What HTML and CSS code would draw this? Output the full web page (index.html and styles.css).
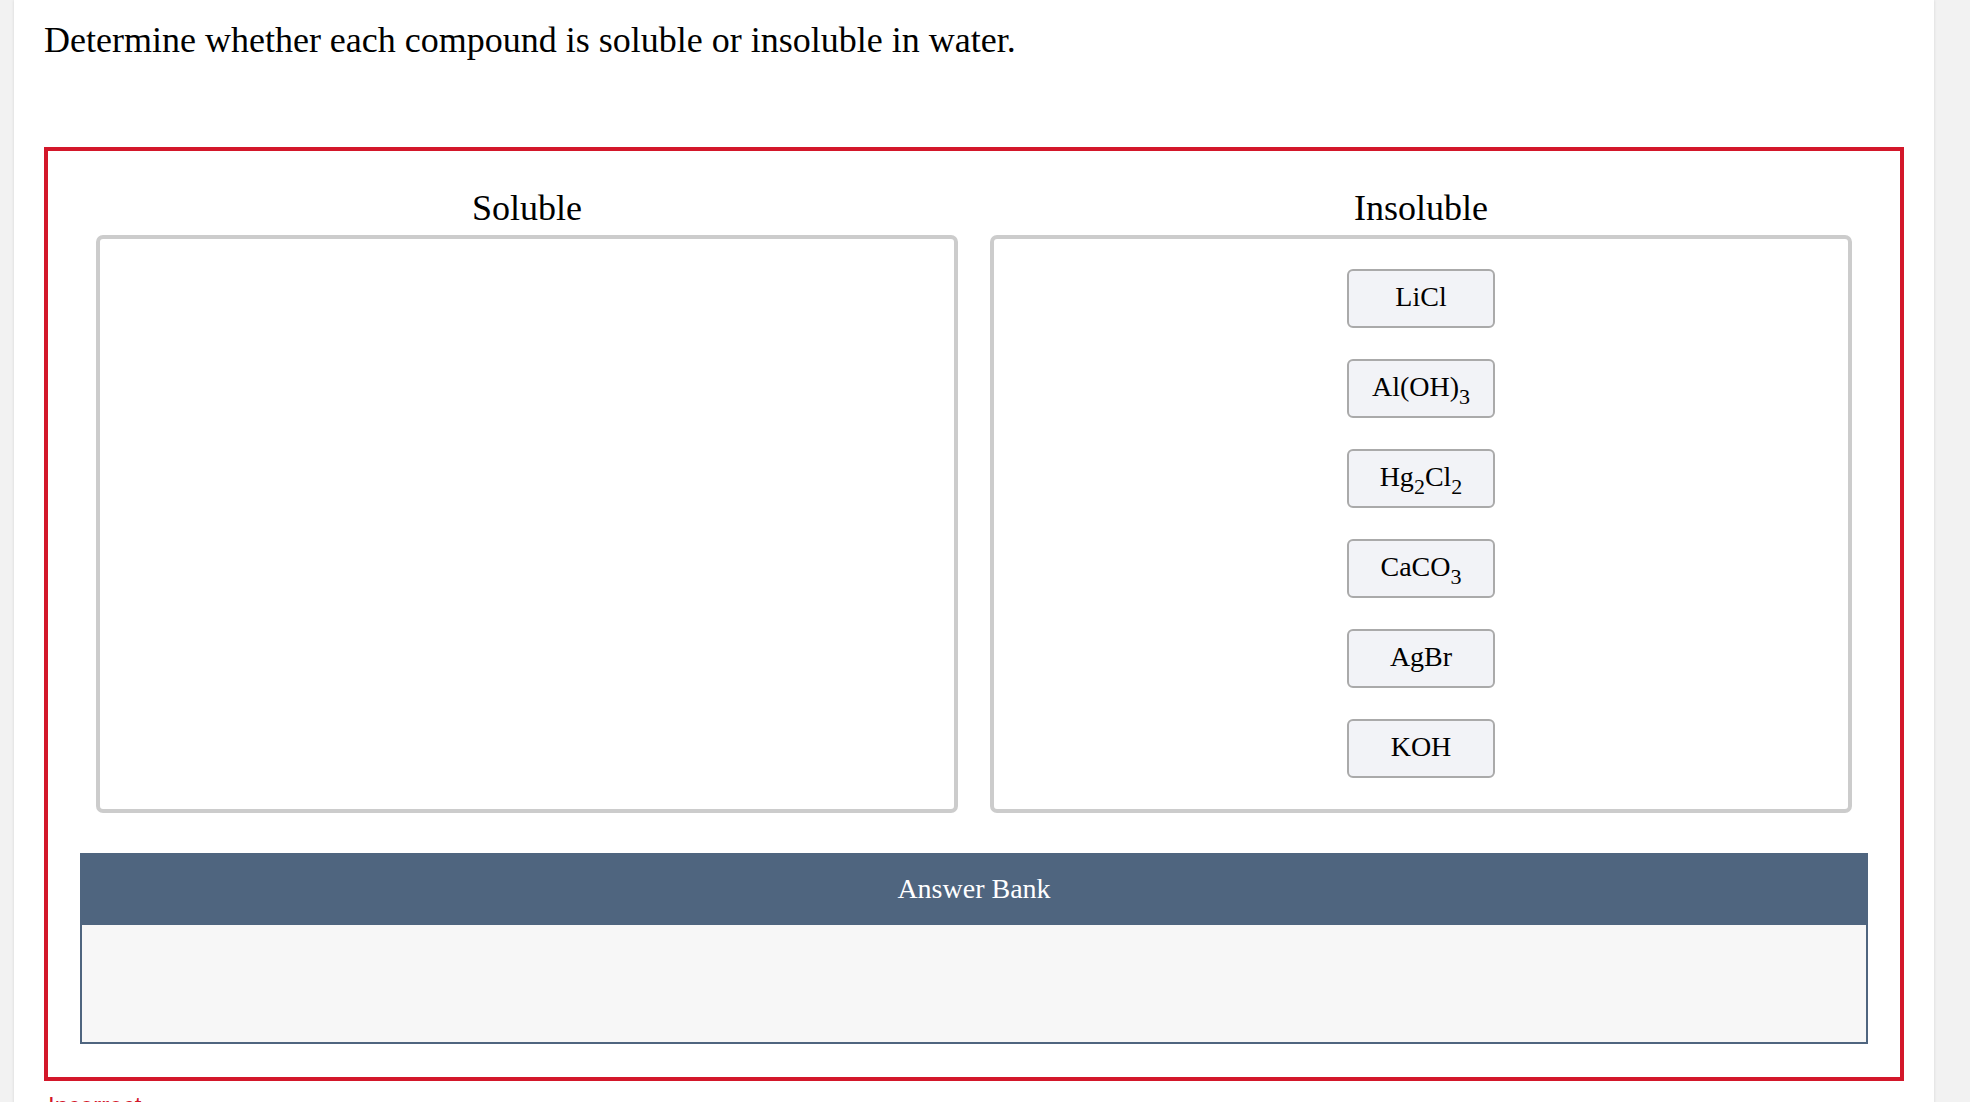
FILE: index.html
```html
<!DOCTYPE html>
<html lang="en">
<head>
<meta charset="utf-8">
<title>Soluble or insoluble</title>
<link rel="stylesheet" href="styles.css">
</head>
<body>
<div class="sheet">
  <p class="prompt">Determine whether each compound is soluble or insoluble in water.</p>
  <div class="question">
    <div class="bins">
      <div class="bin">
        <h2 class="bin-title">Soluble</h2>
        <div class="bin-box"></div>
      </div>
      <div class="bin">
        <h2 class="bin-title">Insoluble</h2>
        <div class="bin-box">
          <div class="tile"><span class="formula">LiCl</span></div>
          <div class="tile"><span class="formula">Al(OH)<sub>3</sub></span></div>
          <div class="tile"><span class="formula">Hg<sub>2</sub>Cl<sub>2</sub></span></div>
          <div class="tile"><span class="formula">CaCO<sub>3</sub></span></div>
          <div class="tile"><span class="formula">AgBr</span></div>
          <div class="tile"><span class="formula">KOH</span></div>
        </div>
      </div>
    </div>
    <div class="bank">
      <div class="bank-head">Answer Bank</div>
      <div class="bank-body"></div>
    </div>
  </div>
  <p class="status">Incorrect</p>
</div>
</body>
</html>
```
FILE: styles.css
```css
html, body {
  margin: 0;
  padding: 0;
}
body {
  background: #f2f2f2;
  font-family: "Liberation Serif", "Times New Roman", serif;
  color: #000;
  height: 1102px;
  overflow: hidden;
}
.sheet {
  margin-left: 14px;
  width: 1920px;
  min-height: 1102px;
  background: #fff;
  box-shadow: 0 0 3px rgba(0, 0, 0, 0.12);
  padding: 20px 30px 0 30px;
  box-sizing: border-box;
}
.prompt {
  margin: 0;
  font-size: 36px;
  line-height: 40px;
}
.question {
  margin-top: 87px;
  width: 1860px;
  box-sizing: border-box;
  border: 4px solid #d3172a;
  padding: 37px 32px 33px 32px;
}
.bins {
  display: grid;
  grid-template-columns: 862px 862px;
  column-gap: 32px;
  padding: 0 16px;
}
.bin-title {
  margin: 0 0 7px 0;
  font-weight: normal;
  font-size: 36px;
  line-height: 40px;
  text-align: center;
}
.bin-box {
  height: 578px;
  box-sizing: border-box;
  border: 4px solid #cccccc;
  border-radius: 7px;
  padding: 30px 0 31px 0;
  display: flex;
  flex-direction: column;
  align-items: center;
  gap: 31px;
}
.tile {
  width: 148px;
  height: 59px;
  box-sizing: border-box;
  border: 2px solid #aaaaaa;
  border-radius: 6px;
  background: #f2f3f7;
  display: flex;
  align-items: center;
  justify-content: center;
  padding-bottom: 4px;
}
.formula {
  display: block;
  font-size: 28px;
  line-height: 32px;
  white-space: nowrap;
}
.formula sub {
  font-size: 22px;
  line-height: 0;
  vertical-align: -8px;
}
.bank {
  margin-top: 40px;
}
.bank-head {
  height: 72px;
  background: #4f657f;
  color: #fff;
  font-size: 28px;
  line-height: 72px;
  text-align: center;
}
.bank-body {
  height: 119px;
  box-sizing: border-box;
  border: 2px solid #4f657f;
  border-top: none;
  background: #f7f7f7;
}
.status {
  margin: 11px 0 0 4px;
  color: #d3172a;
  font-family: "Liberation Sans", Arial, sans-serif;
  font-size: 24px;
  line-height: 28px;
}
```
